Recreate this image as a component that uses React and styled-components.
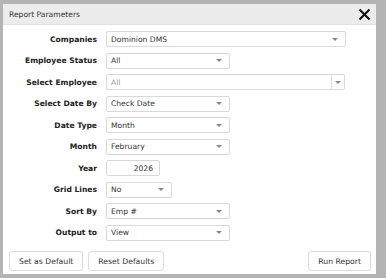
import React from 'react'
import styled, { createGlobalStyle } from 'styled-components'

const Global = createGlobalStyle`
  body {
    margin: 0;
    background: #b4b4b4;
    font-family: "DejaVu Sans", Verdana, sans-serif;
  }
`

const Dialog = styled.div`
  width: 373px;
  height: 270px;
  margin: 4px 0 0 3px;
  background: #fff;
  display: flex;
  flex-direction: column;
`

const TitleBar = styled.div`
  height: 20px;
  background: #ececec;
  border-bottom: 1px solid #e2e2e2;
  display: flex;
  align-items: center;
  justify-content: space-between;
  padding: 0 5px 0 6px;
  font-size: 7.6px;
  color: #333;
`

const Close = styled.button`
  border: 0;
  background: none;
  padding: 0;
  width: 13px;
  height: 13px;
  display: flex;
  cursor: pointer;
`

const Form = styled.div`
  display: grid;
  grid-template-columns: 94px 1fr;
  column-gap: 9px;
  row-gap: 5.5px;
  padding: 6px 0 0 0;
  align-items: center;
`

const Label = styled.label`
  text-align: right;
  font-size: 7.6px;
  font-weight: bold;
  color: #222;
  white-space: nowrap;
`

const Field = styled.div`
  width: ${p => p.w}px;
  height: 16px;
  box-sizing: border-box;
  border: 1px solid #d9d9d9;
  border-radius: 2px;
  display: flex;
  align-items: center;
  font-size: 7.6px;
  color: ${p => (p.disabled ? '#9a9a9a' : '#333')};
  justify-content: ${p => (p.right ? 'flex-end' : 'space-between')};
  padding: 0 ${p => (p.right ? '6px' : '0')} 0 ${p => (p.right ? '0' : '4px')};
`

const Arrow = styled.span`
  width: ${p => (p.split ? 12 : 20)}px;
  height: 100%;
  display: flex;
  align-items: center;
  justify-content: center;
  border-left: ${p => (p.split ? '1px solid #dcdcdc' : 'none')};
  &::after {
    content: '';
    border-left: 3px solid transparent;
    border-right: 3px solid transparent;
    border-top: 3px solid #888;
  }
`

const Footer = styled.div`
  margin-top: auto;
  display: flex;
  gap: 5px;
  padding: 0 5px 3px 6px;
`

const Button = styled.button`
  height: 20px;
  padding: 0 9px;
  background: #fff;
  border: 1px solid #dcdcdc;
  border-radius: 3px;
  font-family: inherit;
  font-size: 7.7px;
  color: #333;
  &:last-child {
    margin-left: auto;
  }
`

const rows = [
  { label: 'Companies', value: 'Dominion DMS', w: 240 },
  { label: 'Employee Status', value: 'All', w: 124 },
  { label: 'Select Employee', value: 'All', w: 239, split: true, disabled: true },
  { label: 'Select Date By', value: 'Check Date', w: 124 },
  { label: 'Date Type', value: 'Month', w: 124 },
  { label: 'Month', value: 'February', w: 124 },
  { label: 'Year', value: '2026', w: 54, right: true },
  { label: 'Grid Lines', value: 'No', w: 66 },
  { label: 'Sort By', value: 'Emp #', w: 124 },
  { label: 'Output to', value: 'View', w: 124 },
]

export default function App() {
  return (
    <>
      <Global />
      <Dialog>
        <TitleBar>
          <span>Report Parameters</span>
          <Close aria-label="Close">
            <svg width="13" height="13" viewBox="0 0 13 13">
              <path d="M1.5 1.5 L11.5 11.5 M11.5 1.5 L1.5 11.5" stroke="#111" strokeWidth="2" />
            </svg>
          </Close>
        </TitleBar>
        <Form>
          {rows.map(r => (
            <React.Fragment key={r.label}>
              <Label>{r.label}</Label>
              <Field w={r.w} right={r.right} disabled={r.disabled}>
                <span>{r.value}</span>
                {!r.right && <Arrow split={r.split} />}
              </Field>
            </React.Fragment>
          ))}
        </Form>
        <Footer>
          <Button>Set as Default</Button>
          <Button>Reset Defaults</Button>
          <Button>Run Report</Button>
        </Footer>
      </Dialog>
    </>
  )
}
